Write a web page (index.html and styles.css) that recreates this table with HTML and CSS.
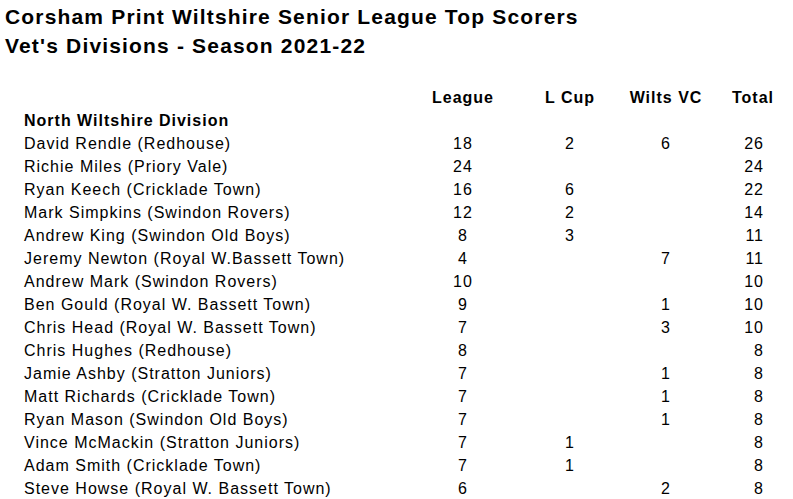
FILE: index.html
```html
<!DOCTYPE html>
<html lang="en">
<head>
<meta charset="utf-8">
<title>Top Scorers</title>
<link rel="stylesheet" href="styles.css">
</head>
<body>
<header class="title">
  <h1>Corsham Print Wiltshire Senior League Top Scorers</h1>
  <h1>Vet's Divisions - Season 2021-22</h1>
</header>
<table class="scorers">
  <colgroup>
    <col class="c-name">
    <col class="c-league">
    <col class="c-gap1">
    <col class="c-cup">
    <col class="c-gap2">
    <col class="c-wilts">
    <col class="c-gap3">
    <col class="c-total">
  </colgroup>
  <thead>
    <tr><th></th><th>League</th><th></th><th>L Cup</th><th></th><th>Wilts VC</th><th></th><th>Total</th></tr>
  </thead>
  <tbody>
    <tr><td class="div">North Wiltshire Division</td><td></td><td></td><td></td><td></td><td></td><td></td><td></td></tr>
    <tr><td>David Rendle (Redhouse)</td><td>18</td><td></td><td>2</td><td></td><td>6</td><td></td><td class="tot">26</td></tr>
    <tr><td>Richie Miles (Priory Vale)</td><td>24</td><td></td><td></td><td></td><td></td><td></td><td class="tot">24</td></tr>
    <tr><td>Ryan Keech (Cricklade Town)</td><td>16</td><td></td><td>6</td><td></td><td></td><td></td><td class="tot">22</td></tr>
    <tr><td>Mark Simpkins (Swindon Rovers)</td><td>12</td><td></td><td>2</td><td></td><td></td><td></td><td class="tot">14</td></tr>
    <tr><td>Andrew King (Swindon Old Boys)</td><td>8</td><td></td><td>3</td><td></td><td></td><td></td><td class="tot">11</td></tr>
    <tr><td>Jeremy Newton (Royal W.Bassett Town)</td><td>4</td><td></td><td></td><td></td><td>7</td><td></td><td class="tot">11</td></tr>
    <tr><td>Andrew Mark (Swindon Rovers)</td><td>10</td><td></td><td></td><td></td><td></td><td></td><td class="tot">10</td></tr>
    <tr><td>Ben Gould (Royal W. Bassett Town)</td><td>9</td><td></td><td></td><td></td><td>1</td><td></td><td class="tot">10</td></tr>
    <tr><td>Chris Head (Royal W. Bassett Town)</td><td>7</td><td></td><td></td><td></td><td>3</td><td></td><td class="tot">10</td></tr>
    <tr><td>Chris Hughes (Redhouse)</td><td>8</td><td></td><td></td><td></td><td></td><td></td><td class="tot">8</td></tr>
    <tr><td>Jamie Ashby (Stratton Juniors)</td><td>7</td><td></td><td></td><td></td><td>1</td><td></td><td class="tot">8</td></tr>
    <tr><td>Matt Richards (Cricklade Town)</td><td>7</td><td></td><td></td><td></td><td>1</td><td></td><td class="tot">8</td></tr>
    <tr><td>Ryan Mason (Swindon Old Boys)</td><td>7</td><td></td><td></td><td></td><td>1</td><td></td><td class="tot">8</td></tr>
    <tr><td>Vince McMackin (Stratton Juniors)</td><td>7</td><td></td><td>1</td><td></td><td></td><td></td><td class="tot">8</td></tr>
    <tr><td>Adam Smith (Cricklade Town)</td><td>7</td><td></td><td>1</td><td></td><td></td><td></td><td class="tot">8</td></tr>
    <tr><td>Steve Howse (Royal W. Bassett Town)</td><td>6</td><td></td><td></td><td></td><td>2</td><td></td><td class="tot">8</td></tr>
  </tbody>
</table>
</body>
</html>
```
FILE: styles.css
```css
html, body {
  margin: 0;
  padding: 0;
  background: #ffffff;
  color: #000000;
  font-family: "Liberation Sans", Arial, sans-serif;
}
body {
  overflow: hidden;
}
.title {
  padding: 2px 0 0 5px;
}
.title h1 {
  margin: 0;
  font-size: 21px;
  font-weight: bold;
  line-height: 29px;
  letter-spacing: 1.17px;
  white-space: nowrap;
}
.scorers {
  margin: 26px 0 0 24px;
  border-collapse: collapse;
  table-layout: fixed;
  width: 768px;
  font-size: 16px;
  letter-spacing: 1px;
}
.c-name { width: 399px; }
.c-league { width: 80px; }
.c-gap1 { width: 27px; }
.c-cup { width: 80px; }
.c-gap2 { width: 16px; }
.c-wilts { width: 80px; }
.c-gap3 { width: 8px; }
.c-total { width: 78px; }
.scorers th,
.scorers td {
  padding: 0;
  height: 23px;
  line-height: 23px;
  text-align: center;
  white-space: nowrap;
  vertical-align: top;
}
.scorers th {
  font-weight: bold;
}
.scorers td:first-child {
  text-align: left;
}
.scorers td.div {
  font-weight: bold;
}
.scorers td.tot {
  text-align: right;
  padding-right: 28px;
}
```
